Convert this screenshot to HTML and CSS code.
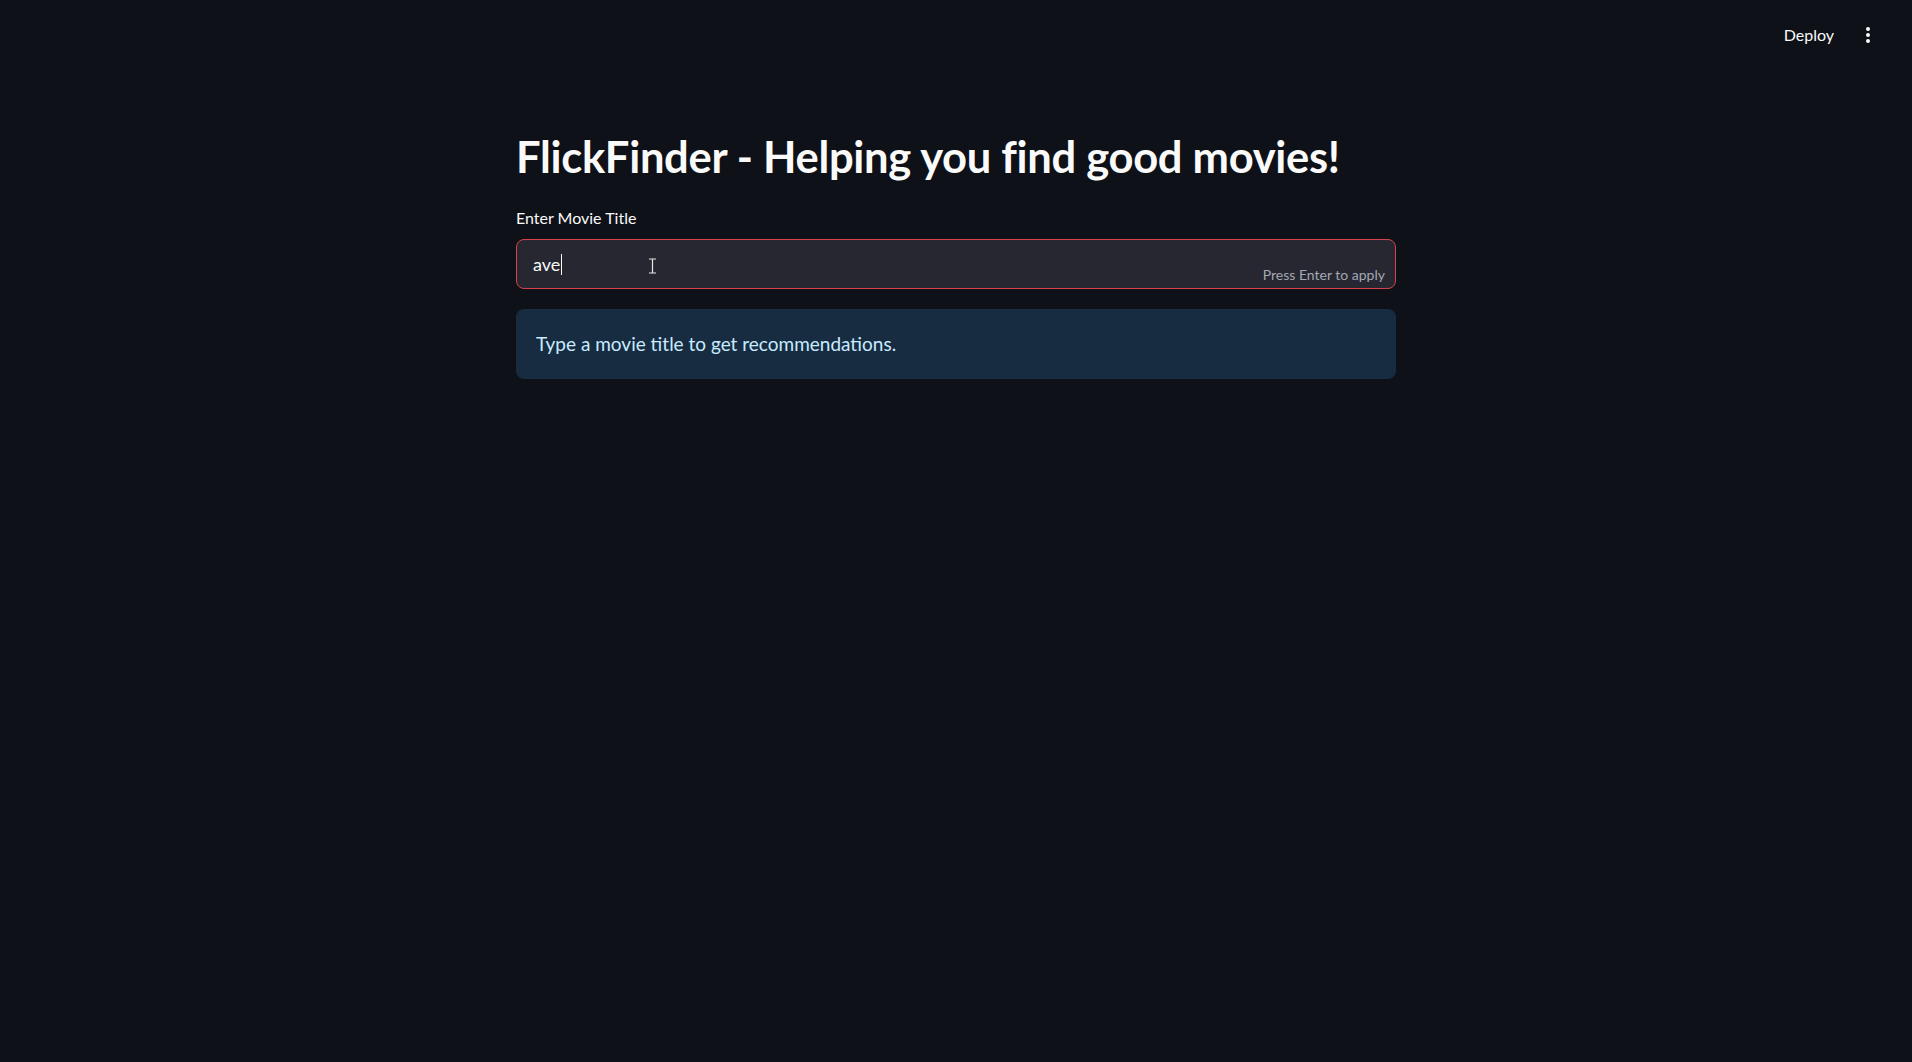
FILE: index.html
```html
<!DOCTYPE html>
<html lang="en">
<head>
<meta charset="utf-8">
<title>FlickFinder</title>
<link rel="stylesheet" href="styles.css">
</head>
<body>
<header class="topbar">
  <button class="deploy">Deploy</button>
  <button class="menu" aria-label="Main menu">
    <svg width="6" height="18" viewBox="0 0 6 18"><circle cx="3" cy="3" r="2" fill="#fafafa"/><circle cx="3" cy="9" r="2" fill="#fafafa"/><circle cx="3" cy="15" r="2" fill="#fafafa"/></svg>
  </button>
</header>
<main class="block">
  <h1 class="title">FlickFinder - Helping you find good movies!</h1>
  <label class="label">Enter Movie Title</label>
  <div class="input">
    <span class="value">ave</span><span class="caret"></span>
    <span class="hint">Press Enter to apply</span>
    <svg class="ibeam" width="9" height="16" viewBox="0 0 9 16"><path d="M1 1h7M1 15h7M4.5 1v14" stroke="#e6e6e6" stroke-width="1.2" fill="none"/></svg>
  </div>
  <div class="info">Type a movie title to get recommendations.</div>
</main>
</body>
</html>
```
FILE: styles.css
```css
html, body {
  margin: 0;
  padding: 0;
  background: #0e1117;
  color: #fafafa;
  font-family: Lato, "Open Sans", sans-serif;
  height: 100%;
}
.topbar {
  height: 60px;
  display: flex;
  align-items: center;
  justify-content: flex-end;
  padding-right: 41px;
  gap: 31px;
}
.deploy {
  background: none;
  border: none;
  color: #fafafa;
  font-family: Lato, sans-serif;
  font-size: 16px;
  padding: 0;
  margin-top: 8px;
}
.menu {
  background: none;
  border: none;
  padding: 0;
  display: flex;
  margin-top: 10px;
}
.block {
  width: 880px;
  margin: 0 auto;
  padding-top: 71px;
  display: flex;
  flex-direction: column;
}
.title {
  margin: 0;
  font-size: 43.5px;
  font-weight: 700;
  line-height: 51px;
  letter-spacing: -0.3px;
}
.label {
  margin-top: 26px;
  font-size: 16px;
  line-height: 20px;
  height: 20px;
}
.input {
  margin-top: 11px;
  position: relative;
  height: 48px;
  border: 1px solid #d8414a;
  border-radius: 8px;
  background: #262730;
  display: flex;
  align-items: center;
  padding-left: 16px;
}
.value {
  font-size: 18px;
  color: #fafafa;
}
.caret {
  width: 1px;
  height: 21px;
  background: #fafafa;
  margin-left: 1px;
}
.hint {
  position: absolute;
  right: 10px;
  bottom: 5px;
  font-size: 14px;
  color: #a3a8b4;
}
.ibeam {
  position: absolute;
  left: 131px;
  top: 18px;
}
.info {
  margin-top: 20px;
  height: 70px;
  border-radius: 8px;
  background: #182c41;
  color: #c7ebff;
  font-size: 19px;
  display: flex;
  align-items: center;
  padding-left: 20px;
  padding-bottom: 2px;
  box-sizing: border-box;
}
```
